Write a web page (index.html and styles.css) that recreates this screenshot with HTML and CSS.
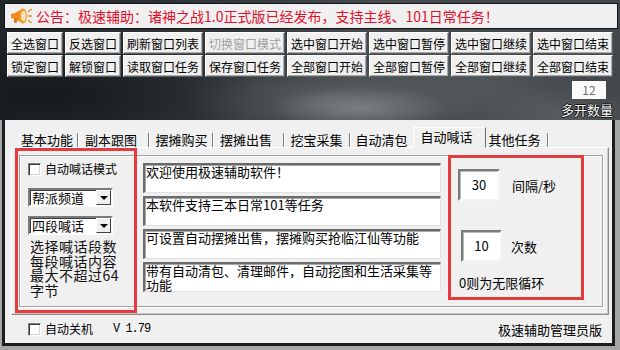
FILE: index.html
```html
<!DOCTYPE html>
<html lang="zh-CN">
<head>
<meta charset="utf-8">
<title>极速辅助</title>
<link rel="stylesheet" href="styles.css">
</head>
<body>
<div class="app">
  <header class="top">
    <div class="notice">
      <svg class="horn" width="22" height="18" viewBox="0 0 22 18">
        <path d="M1 7 L5 6 L13 1.5 L13 16.5 L5 12 L1 11 Z" fill="#f08a1c"/>
        <rect x="4" y="11" width="3" height="5" rx="1" fill="#e07810"/>
        <ellipse cx="13" cy="9" rx="4" ry="7.5" fill="#f39a2a"/>
        <ellipse cx="13.5" cy="9" rx="2.3" ry="5" fill="#fde6c4"/>
        <path d="M18.5 4.5 L21 2.5 M18.5 9 L21.5 9 M18.5 13.5 L21 15.5" stroke="#f08a1c" stroke-width="1.6" stroke-linecap="round"/>
      </svg>
      <span class="notice-text">公告：极速辅助：诸神之战1.0正式版已经发布，支持主线、101日常任务！</span>
    </div>
    <div class="btnrow first">
      <button class="btn sm">全选窗口</button>
      <button class="btn sm">反选窗口</button>
      <button class="btn">刷新窗口列表</button>
      <button class="btn disabled">切换窗口模式</button>
      <button class="btn">选中窗口开始</button>
      <button class="btn">选中窗口暂停</button>
      <button class="btn">选中窗口继续</button>
      <button class="btn">选中窗口结束</button>
    </div>
    <div class="btnrow">
      <button class="btn sm">锁定窗口</button>
      <button class="btn sm">解锁窗口</button>
      <button class="btn">读取窗口任务</button>
      <button class="btn">保存窗口任务</button>
      <button class="btn">全部窗口开始</button>
      <button class="btn">全部窗口暂停</button>
      <button class="btn">全部窗口继续</button>
      <button class="btn">全部窗口结束</button>
    </div>
    <div class="multi">
      <div class="count">12</div>
      <div class="count-label">多开数量</div>
    </div>
  </header>

  <main class="panel">
    <nav class="tabs">
      <span class="tab t1">基本功能</span>
      <span class="tab t2">副本跟图</span>
      <span class="tab t3">摆摊购买</span>
      <span class="tab t4">摆摊出售</span>
      <span class="tab t5">挖宝采集</span>
      <span class="tab t6 noline">自动清包</span>
      <span class="tab t7 active">自动喊话</span>
      <span class="tab t8">其他任务</span>
    </nav>

    <section class="tabbody">
      <div class="group">
        <div class="col-left">
          <label class="chkrow"><span class="chk"></span><span class="chk-text">自动喊话模式</span></label>
          <div class="combo first"><span class="combo-text">帮派频道</span><span class="drop"></span></div>
          <div class="combo"><span class="combo-text">四段喊话</span><span class="drop"></span></div>
          <p class="hint">选择喊话段数每段喊话内容最大不超过64字节</p>
        </div>
        <div class="col-mid">
          <div class="memo">欢迎使用极速辅助软件！</div>
          <div class="memo">本软件支持三本日常101等任务</div>
          <div class="memo">可设置自动摆摊出售，摆摊购买抢临江仙等功能</div>
          <div class="memo">带有自动清包、清理邮件，自动挖图和生活采集等功能</div>
        </div>
        <div class="col-right">
          <div class="field f1"><span class="num">30</span><span class="field-label">间隔/秒</span></div>
          <div class="field f2"><span class="num">10</span><span class="field-label">次数</span></div>
          <p class="note">0则为无限循环</p>
        </div>
      </div>
      <div class="mark mark-left"></div>
      <div class="mark mark-right"></div>
    </section>

    <footer class="foot">
      <label class="chkrow"><span class="chk"></span><span class="chk-text">自动关机</span></label>
      <span class="ver">V 1.79</span>
      <span class="edition">极速辅助管理员版</span>
    </footer>
  </main>
</div>
</body>
</html>
```

FILE: styles.css
```css
* { box-sizing: border-box; margin: 0; padding: 0; }

html, body { width: 620px; height: 350px; overflow: hidden; }

body {
  font-family: "Noto Sans CJK SC", "Noto Sans", sans-serif;
  font-size: 13px;
  color: #000;
  background:
    linear-gradient(to bottom, transparent 0 120px, #a4a6a8 120px),
    radial-gradient(ellipse 90px 22px at 360px 108px, rgba(150,156,160,0.55), transparent),
    radial-gradient(ellipse 150px 40px at 330px 100px, rgba(105,112,116,0.6), transparent),
    radial-gradient(ellipse 110px 45px at 480px 90px, rgba(95,102,106,0.55), transparent),
    radial-gradient(ellipse 80px 30px at 560px 115px, rgba(110,116,120,0.45), transparent),
    radial-gradient(ellipse 200px 60px at 60px 95px, rgba(10,14,18,0.55), transparent),
    linear-gradient(to right, #202529 0%, #30363a 35%, #444a4e 60%, #41474b 100%);
}

.app { width: 620px; height: 350px; }

/* ---------- header ---------- */
.top { height: 120px; padding-top: 3px; }

.notice {
  height: 26px;
  margin: 0 2px 0 4px;
  border: 1px solid #141414;
  background: #f0f0f0;
  display: flex;
  align-items: center;
  padding-left: 5px;
  gap: 4px;
}
.horn { flex: none; }
.notice-text {
  color: #e0102e;
  font-size: 14px;
  line-height: 18px;
  white-space: nowrap;
}

.btnrow {
  display: flex;
  gap: 2px;
  height: 22px;
  margin-top: 1px;
  padding-left: 7px;
}
.btnrow.first { margin-top: 3px; }

.btn {
  width: 80px;
  height: 22px;
  font: inherit;
  font-size: 12px;
  line-height: 19px;
  color: #000;
  background: #f0f0f0;
  border: 1px solid;
  border-color: #ffffff #5e5e5e #5e5e5e #ffffff;
  box-shadow: inset -1px -1px 0 #a8a8a8;
  text-align: center;
  padding: 0;
}
.btn.sm { width: 56px; }
.btn.disabled { color: #a0a0a0; }

.multi {
  display: flex;
  flex-direction: column;
  align-items: flex-end;
}
.count {
  width: 34px;
  height: 18px;
  margin-top: 4px;
  margin-right: 14px;
  background: #fbfbfb;
  color: #707070;
  font-size: 12px;
  line-height: 18px;
  text-align: center;
}
.count-label {
  margin-top: 4px;
  margin-right: 7px;
  font-size: 13px;
  line-height: 14px;
  color: #fff;
  text-shadow: 1px 0 0 #111, -1px 0 0 #111, 0 1px 0 #111, 0 -1px 0 #111;
}

/* ---------- main panel ---------- */
.panel {
  height: 226px;
  margin: 0 5px 0 2px;
  border: 3px solid #1c1c1c;
  border-top: none;
  background: #f0f0f0;
}

.tabs {
  height: 27px;
  padding-left: 12px;
  display: flex;
  align-items: flex-end;
}
.tab {
  height: 14px;
  line-height: 14px;
  font-size: 13px;
  text-align: center;
  border-right: 1px solid #7a7a7a;
  box-shadow: 1px 0 0 #fff;
  white-space: nowrap;
}
.tab.noline { border-right: none; box-shadow: none; }
.t1 { width: 61px; }
.t2 { width: 71px; padding-right: 4px; }
.t3 { width: 64px; padding-left: 2px; }
.t4 { width: 71px; padding-right: 4px; }
.t5 { width: 66px; }
.t6 { width: 63px; }
.t7 { width: 73px; }
.t8 { width: 62px; padding-right: 4px; }
.tab.active {
  height: 21px;
  margin-bottom: -1px;
  padding: 2px 6px 0 0;
  background: #f0f0f0;
  border: 1px solid;
  border-color: #ffffff #6a6a6a transparent #ffffff;
  box-shadow: none;
  position: relative;
  z-index: 1;
}

.tabbody {
  position: relative;
  height: 168px;
  margin: 0 3px 0 6px;
  border: 1px solid;
  border-color: #ffffff #8a8a8a #8a8a8a #ffffff;
  box-shadow: inset -1px -1px 0 #c8c8c8;
  padding: 7px 5px 7px 7px;
}

.group {
  height: 152px;
  border: 1px solid #a0a0a0;
  box-shadow: inset 1px 1px 0 #fff, 1px 1px 0 #fff;
  display: grid;
  grid-template-columns: 123px 298px 1fr;
}

/* left column */
.col-left { padding: 6px 0 0 8px; }
.chkrow { display: flex; align-items: center; height: 14px; gap: 4px; }
.chk {
  flex: none;
  width: 13px;
  height: 13px;
  background: #fff;
  border: 1px solid;
  border-color: #7c7c7c #ffffff #ffffff #7c7c7c;
  box-shadow: inset 1px 1px 0 #3c3c3c, inset -1px -1px 0 #d8d8d8;
}
.chk-text { font-size: 12px; line-height: 14px; white-space: nowrap; }

.combo {
  width: 85px;
  height: 19px;
  margin-top: 9px;
  background: #fff;
  border: 2px solid;
  border-color: #7a7a7a #ffffff #ffffff #7a7a7a;
  box-shadow: inset 1px 1px 0 #3c3c3c;
  display: flex;
  align-items: center;
  justify-content: space-between;
  padding-left: 2px;
}
.combo.first { margin-top: 12px; }
.combo-text { font-size: 13px; line-height: 15px; }
.drop {
  width: 15px;
  height: 15px;
  background: #f0f0f0;
  border: 1px solid;
  border-color: #ffffff #404040 #404040 #ffffff;
  display: flex;
  align-items: center;
  justify-content: center;
}
.drop::after {
  content: "";
  border-left: 4px solid transparent;
  border-right: 4px solid transparent;
  border-top: 4px solid #000;
}

.hint {
  width: 96px;
  margin-top: 4px;
  padding-left: 2px;
  font-size: 14px;
  letter-spacing: 0.5px;
  line-height: 14.5px;
  color: #111;
}

/* middle column */
.col-mid { padding-top: 7px; }
.memo {
  height: 30px;
  margin-bottom: 3px;
  background: #fff;
  border: solid;
  border-width: 2px 1px 1px 2px;
  border-color: #6a6a6a #e2e2e2 #e2e2e2 #6a6a6a;
  box-shadow: inset 1px 1px 0 #a8a8a8;
  padding: 0 1px 0 1px;
  font-size: 13px;
  line-height: 13.5px;
}

/* right column */
.col-right { padding-left: 17px; }
.field { display: flex; align-items: center; }
.f1 { margin-top: 13px; gap: 12px; }
.f2 { margin-top: 29px; gap: 9px; padding-left: 3px; }
.num {
  width: 42px;
  height: 32px;
  background: #fff;
  border: 2px solid;
  border-color: #7a7a7a #f4f4f4 #f4f4f4 #7a7a7a;
  box-shadow: inset 1px 1px 0 #b8b8b8;
  text-align: center;
  font-size: 13px;
  line-height: 28px;
}
.f2 .num { width: 41px; }
.field-label { font-size: 13px; }
.note { margin-top: 14px; margin-left: 1px; font-size: 13px; line-height: 14px; }

/* red annotation frames laid over the dialog */
.mark {
  position: absolute;
  border: 3px solid #e53a3e;
  pointer-events: none;
}
.mark-left { left: 3px; top: 0; width: 122px; height: 165px; }
.mark-right { left: 436px; top: 7px; width: 136px; height: 145px; }

/* footer */
.foot {
  height: 28px;
  display: flex;
  align-items: center;
  padding-left: 23px;
}
.ver {
  margin-left: 20px;
  font-family: "Liberation Mono", monospace;
  font-size: 12px;
  letter-spacing: -1px;
}
.edition { margin-left: auto; margin-right: 10px; font-size: 13px; }
```
